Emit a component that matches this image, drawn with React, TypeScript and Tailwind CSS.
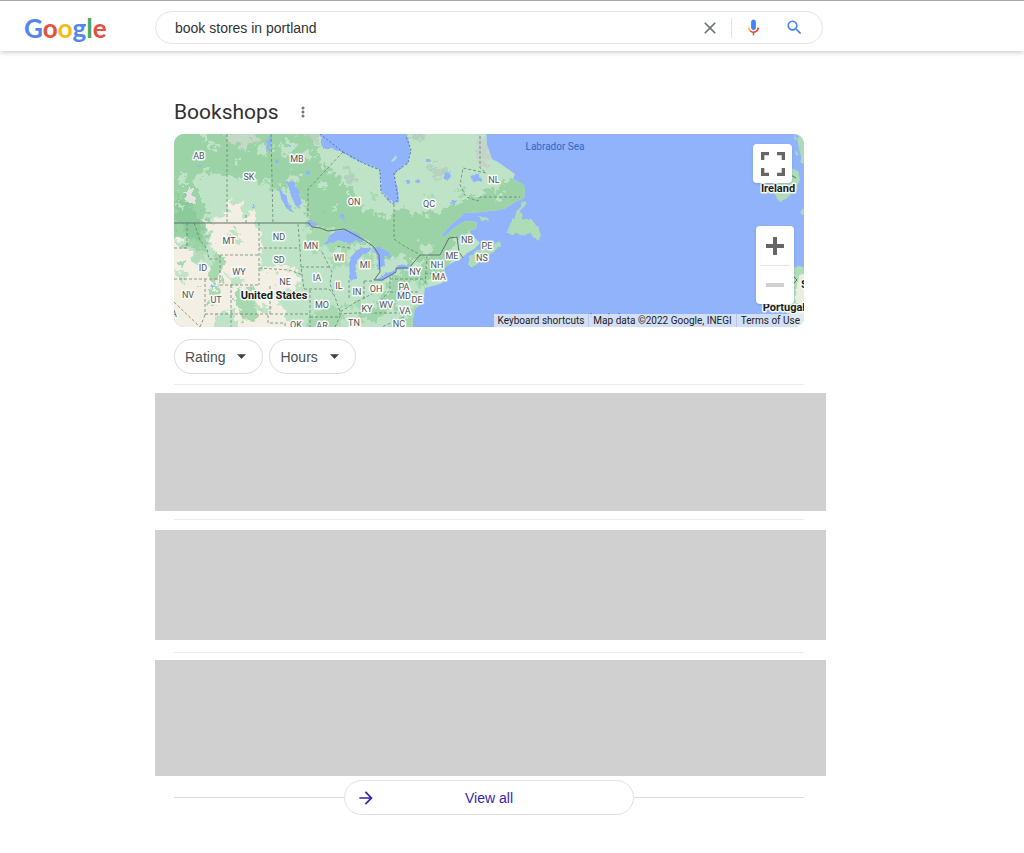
import { useState } from 'react';

const stateLabels: [string, number, number][] = [
  ['AB', 199, 156], ['SK', 249, 177], ['MB', 297, 159], ['ON', 354, 202], ['QC', 429, 204],
  ['NL', 494, 180], ['MT', 229, 241], ['ND', 279, 237], ['MN', 311, 246], ['SD', 279, 260],
  ['WI', 339, 258], ['MI', 365, 265], ['ID', 203, 268], ['WY', 239, 272], ['NE', 285, 282],
  ['IA', 317, 278], ['IL', 339, 286], ['IN', 357, 292], ['OH', 376, 289], ['NY', 415, 272],
  ['PA', 404, 287], ['NH', 437, 265], ['ME', 452, 256], ['NB', 467, 240], ['PE', 487, 246],
  ['NS', 482, 258], ['MA', 439, 277], ['MD', 404, 296], ['DE', 417, 300], ['NV', 188, 295],
  ['UT', 216, 300], ['WV', 386, 305], ['VA', 405, 311], ['MO', 322, 305], ['KY', 367, 309],
  ['TN', 354, 323], ['NC', 399, 324], ['OK', 296, 325], ['AR', 322, 326], ['A', 174, 314],
];

const countryLabels: [string, number, number][] = [
  ['United States', 274, 295],
  ['Ireland', 778, 188],
  ['Portugal', 784, 307],
  ['Spain', 815, 284],
];

function MapCanvas() {
  return (
    <svg
      viewBox="174 134 630 193"
      preserveAspectRatio="xMidYMid slice"
      className="block h-[193px] w-full bg-[#90b3fb]"
      aria-label="Map of bookshops"
    >
      <defs>
        <filter id="rough" x="-5%" y="-5%" width="110%" height="110%">
          <feTurbulence type="fractalNoise" baseFrequency="0.14" numOctaves="4" seed="4" />
          <feDisplacementMap in="SourceGraphic" scale="20" xChannelSelector="R" yChannelSelector="G" />
        </filter>
        <filter id="coast" x="-5%" y="-5%" width="110%" height="110%">
          <feTurbulence type="fractalNoise" baseFrequency="0.2" numOctaves="2" seed="9" />
          <feDisplacementMap in="SourceGraphic" scale="4" xChannelSelector="R" yChannelSelector="G" />
        </filter>
        <clipPath id="land">
          <path d="M160 120H485L487 145L492 159L498 162L505 167L515 174L513 179L524 185L525 192L524 198L515 202L506 208L499 210L482 212L465 213L452 224L441 236L445 236L455 227L465 221L477 222L476 229L469 231L472 235L480 243L474 249L467 253L462 258L452 263L445 267L444 274L447 280L440 284L425 288L424 295L420 305L415 309L413 319L412 340H160Z" />
        </clipPath>
      </defs>

      {/* Continent */}
      <g clipPath="url(#land)">
        <rect x="160" y="120" width="400" height="220" fill="#bfe3c7" />
        <g filter="url(#rough)">
          <path fill="#9bd3a6" d="M150 110H302L312 140L322 166L338 176L349 190L359 207L374 212L389 215L405 208L419 215L440 210L455 203L474 196L489 191L506 182L540 178V215L460 236L440 262L410 262L396 252L392 262L368 246L344 230L308 226L306 206L300 196L290 182L284 194L268 178L250 182L236 178L222 174L204 172L196 178L198 190L206 212L206 228L208 240L204 256L192 244L182 238L150 240Z" />
          <path fill="#8bca9a" d="M174 192L186 200L196 210L202 224L202 242L192 240L184 228L174 222Z" />
          <path fill="#a6d9b0" d="M308 226L340 232L362 240L352 252L334 250L324 246L312 254L306 238Z" />
          <path fill="#aadab3" d="M328 256L348 254L346 266L334 268Z M360 256L374 252L374 264L362 266Z" />
          <path fill="#9fd5aa" d="M392 276L404 272L424 264L438 256L458 250L448 268L430 282L420 286L412 278L404 290L394 306L382 316L366 324L360 318L376 304L384 292Z" />
          <path fill="#a6d9b0" d="M310 306L328 302L342 312L334 340H306Z" />
          <path fill="#a6d9b0" d="M400 318L416 304V340H392L386 326Z" />
          <path fill="#f4efe4" d="M150 238L176 240L188 248L194 262L206 268L216 262L210 236L206 222L226 220L252 222L260 232L262 250L260 270L292 268L302 276L298 288L276 290L280 306L290 320V340H150Z" />
          <path fill="#f4efe4" d="M212 220L226 214L229 200L240 203L243 214L254 217L252 226Z" />
          <path fill="#bfe3c7" d="M262 258H300L300 268L262 266Z" />
          <path fill="#b2dcb9" d="M192 250L206 252L204 262L196 262Z" />
          <path fill="#a8d8b0" d="M214 254L224 256L222 268L218 282L222 292L210 308L212 286L210 272Z" />
          <path fill="#a8d8b0" d="M236 288L252 290L258 304L256 318L242 322L236 306Z" />
          <path fill="#bfe3c7" d="M218 314L234 310L236 330H214Z" />
          <path fill="#bfe3c7" d="M256 304L272 306L270 312H256Z" />
          <path fill="#bfe3c7" d="M178 270L186 272L184 286L180 282Z" />
          <path fill="#bfe3c7" d="M226 232L240 234L244 242L234 242Z" />
          <path fill="#bfe3c7" d="M226 274L238 276L244 284L234 284Z" />
          <path fill="#bfe3c7" d="M286 296L316 296L316 318L288 314Z" />
          <path fill="#c4d8c8" d="M222 130L250 130L258 142L242 148L230 142Z" />
          <path fill="#b8d0be" d="M292 124H322L320 142L308 140Z" />
          <path fill="#b4cfbb" d="M408 130L424 132L422 142L412 140Z" />
          <path fill="#b6d1bd" d="M428 166L446 168L444 176L434 178Z" />
          <path fill="#c6d3cb" d="M476 130L486 138L492 160L486 166L476 160Z" />
          <path fill="#b4d1bb" d="M346 166L354 168L356 182L350 184Z" />
          <path fill="#e3e5e2" d="M180 190L192 192L196 204L186 202Z" />
        </g>
        <g filter="url(#rough)" fill="#bfe3c7">
          <circle cx="214" cy="146" r="4" />
          <circle cx="204" cy="136" r="3" />
          <circle cx="236" cy="162" r="3" />
          <circle cx="264" cy="150" r="6" />
          <circle cx="288" cy="150" r="8" />
          <circle cx="308" cy="156" r="5" />
          <circle cx="294" cy="178" r="5" />
          <circle cx="322" cy="184" r="4" />
          <circle cx="336" cy="206" r="3" />
          <circle cx="426" cy="250" r="7" />
          <circle cx="396" cy="258" r="5" />
          <circle cx="388" cy="318" r="3" />
          <circle cx="500" cy="198" r="4" />
          <circle cx="182" cy="180" r="4" />
          <circle cx="180" cy="206" r="3" />
        </g>
        <g filter="url(#rough)" fill="#a6d9b0">
          <circle cx="270" cy="186" r="4" />
          <circle cx="296" cy="206" r="3" />
          <circle cx="372" cy="194" r="3" />
          <circle cx="430" cy="196" r="3" />
          <circle cx="462" cy="190" r="4" />
          <circle cx="342" cy="308" r="4" />
          <circle cx="358" cy="304" r="3" />
          <circle cx="180" cy="264" r="3" />
          <circle cx="236" cy="228" r="2" />
          <circle cx="196" cy="288" r="2" />
        </g>
      </g>

      {/* Hudson Bay, St Lawrence and lakes */}
      <g fill="#90b3fb" filter="url(#coast)">
        <path d="M319 128H402L408 138L411 150L408 162L400 169L394 174L398 190L399 201L394 204L388 199L381 190L380 169L363 163L350 157L342 152L332 149L323 149Z" />
        <path d="M324 245L330 235L337 231L344 229L357 232L365 241L358 241L349 244L339 240L331 243Z" />
        <path d="M350 280L349 262L354 252L361 248L373 248L364 254L357 260L356 279Z" />
        <path d="M372 247L380 248L389 252L391 258L384 257L385 266L379 270L376 266L378 257Z" />
        <path d="M374 280L382 275L395 270L396 273L382 281Z" />
        <path d="M396 267L402 265L410 264L409 268L397 270Z" />
        <path d="M286 181L294 182L298 190L301 200L300 209L295 205L291 194Z" />
        <path d="M279 188L283 190L288 202L293 211L288 211L281 198Z" />
        <path d="M266 143L270 134L272 142L270 152L266 150Z" />
        <path d="M308 219L311 221L320 225L313 226L309 225Z" />
        <path d="M471 177L478 173L482 180L474 182Z" />
        <path d="M444 172L451 171L449 179L445 180Z" />
        <path d="M450 202L457 200L455 205Z" />
        <path d="M340 214L346 216L344 220L340 218Z" />
        <path d="M253 202L256 208L253 207Z" />
        <path d="M210 284L215 287L212 289Z" />
        <circle cx="308" cy="173" r="2" />
        <circle cx="290" cy="147" r="1" />
        <circle cx="408" cy="182" r="2" />
        <circle cx="417" cy="181" r="2" />
        <circle cx="428" cy="160" r="2" />
        <circle cx="324" cy="212" r="1" />
        <circle cx="200" cy="166" r="1" />
        <circle cx="277" cy="162" r="2" />
      </g>

      {/* Islands */}
      <g fill="#aedcb7" filter="url(#coast)">
        <path d="M524 201L517 212L510 225L506 234L515 234L525 235L530 233L534 238L539 241L541 232L535 224L530 219L522 219L521 211L527 203Z" />
        <path d="M468 266L470 256L478 250L490 248L494 243L500 240L501 246L494 252L483 258L475 266Z" />
        <path d="M478 216L484 216L490 221L482 221Z" />
        <path d="M480 245L492 246L490 249L482 248Z" />
        <path d="M776 200L774 190L780 180L778 170L790 167L798 171L800 180L795 191L788 197L782 201Z" />
        <path d="M797 140L802 134L812 134V166L802 163L800 152Z" />
        <path d="M794 135L797 138L795 142Z M795 148L798 153L796 155Z" />
        <path d="M801 213L806 204V216Z" />
        <path d="M788 268L812 266V340H786L790 320L782 304Z" />
      </g>
      <path d="M391 161L396 155L397 158L393 162Z" fill="#b5dccf" />
      <path d="M798 276L808 272V303H795Z M790 314L808 308V330H796Z" fill="#e9efe0" filter="url(#coast)" />
      <path d="M794 277l3 3l-3 3M789 174l7 4" fill="none" stroke="#5f7567" strokeWidth="1" />
      <path d="M591 313v5M609 313v4M619 313v3" stroke="#3f63b5" strokeWidth="1" />

      {/* State and province borders */}
      <g fill="none" stroke="#63806c" strokeWidth="1" strokeDasharray="3 2" opacity="0.75">
        <path d="M227 134V223M271 134L273 223M343 152L308 189V218M394 204V239L404 246L419 254" />
        <path d="M259 223V285M259 248H300M298 224L300 249L301 267L304 289M259 268L289 270L303 275M220 255H259M220 255V285H259" />
        <path d="M187 223V248H174M174 279H220M205 279V315M231 285V327M205 314H310M270 286V314M174 302L200 327M205 315L200 327" />
        <path d="M194 223L200 240L207 249L209 259H220M301 267H329M304 289H329L333 294M310 290V327M310 317H338M322 252L326 260L332 272L330 284L336 300L340 312L356 302L376 292" />
        <path d="M349 280V298M364 281V300M364 281H372M390 276V290L378 304M390 279H424M390 292H418M339 314L356 313H404M335 327L341 314M404 317L382 327" />
        <path d="M427 256L425 286M425 274L444 272M350 248L335 246M480 136V168L486 173L463 168L460 185L466 197L478 201L480 197L520 197" />
        <path d="M268 315V323H285V327M246 223V215" />
      </g>
      <path d="M320 134L343 152M343 152L363 163L380 170L381 192L392 204L398 200L394 173L408 163L411 150L406 136" fill="none" stroke="#5277ae" strokeWidth="1" strokeDasharray="2 2" />
      <path d="M174 223H309L312 227L320 228L328 231L344 229L364 240L374 247L379 255L380 272L374 280L382 280L396 272V268H409L420 255L440 255L449 238L457 237L459 252L463 258" fill="none" stroke="#5f7567" strokeWidth="1" />

      <g
        className="font-['Roboto',sans-serif] text-[9px]"
        textAnchor="middle"
        fill="#51565b"
        stroke="#f5faf6"
        strokeWidth="3"
        strokeLinejoin="round"
        paintOrder="stroke"
      >
        {stateLabels.map(([name, x, y]) => (
          <text key={name} x={x} y={y + 3}>{name}</text>
        ))}
      </g>
      <g
        className="font-['Roboto',sans-serif] text-[11px] font-bold"
        textAnchor="middle"
        fill="#1c1e20"
        stroke="#f5faf6"
        strokeWidth="3"
        strokeLinejoin="round"
        paintOrder="stroke"
      >
        {countryLabels.map(([name, x, y]) => (
          <text key={name} x={x} y={y + 4}>{name}</text>
        ))}
      </g>
      <text x="555" y="150" textAnchor="middle" fill="#3566c9" className="font-['Roboto',sans-serif] text-[10px]">
        Labrador Sea
      </text>
    </svg>
  );
}

function Header() {
  const [query, setQuery] = useState('book stores in portland');

  return (
    <header className="flex h-[51px] items-center border-t border-[#a9a9a9] bg-white pt-[3px] shadow-[0_1px_5px_rgba(32,33,36,0.28)]">
      <a
        href="#home"
        aria-label="Google home"
        className="w-[155px] shrink-0 pl-6 font-['Lato',sans-serif] text-[26px] font-bold leading-8"
      >
        <span className="text-[#5285f0]">G</span>
        <span className="text-[#e5503f]">o</span>
        <span className="text-[#f6bb17]">o</span>
        <span className="text-[#5285f0]">g</span>
        <span className="text-[#43ab57]">l</span>
        <span className="text-[#e5503f]">e</span>
      </a>
      <form
        role="search"
        onSubmit={(e) => e.preventDefault()}
        className="flex h-[33px] w-full max-w-[668px] items-center rounded-full border border-[#e3e5e8] pl-[19px] pr-3.5"
      >
        <input
          aria-label="Search"
          value={query}
          onChange={(e) => setQuery(e.target.value)}
          className="min-w-0 flex-1 bg-transparent text-sm text-[#333] outline-none"
        />
        <button type="button" aria-label="Clear" onClick={() => setQuery('')} className="p-1">
          <svg viewBox="0 0 24 24" className="h-5 w-5" fill="#70757a">
            <path d="M19 6.41L17.59 5 12 10.59 6.41 5 5 6.41 10.59 12 5 17.59 6.41 19 12 13.41 17.59 19 19 17.59 13.41 12z" />
          </svg>
        </button>
        <span className="ml-[7px] mr-2 h-5 w-px bg-[#dfe1e5]" />
        <button type="button" aria-label="Search by voice" className="p-1">
          <svg viewBox="0 0 24 24" className="h-[19px] w-[19px]">
            <path fill="#4285f4" d="M12 15c1.66 0 3-1.31 3-2.97V4.98C15 3.32 13.66 2 12 2S9 3.32 9 4.98v7.05C9 13.69 10.34 15 12 15z" />
            <path fill="#34a853" d="M11 18.08h2V22h-2z" />
            <path fill="#fbbc04" d="M7.05 16.87A6.9 6.9 0 0 1 5 12h2c0 1.45.56 2.42 1.47 3.38v.32l-1.15 1.18z" />
            <path fill="#ea4335" d="M12 16.93a4.97 4.97 0 0 1-3.54-1.55l-1.41 1.49A6.98 6.98 0 0 0 12 18.93c3.87 0 6.99-2.92 6.99-6.93h-1.99c0 2.92-2.24 4.93-5 4.93z" />
          </svg>
        </button>
        <button type="submit" aria-label="Search" className="ml-3.5 p-1">
          <svg viewBox="0 0 24 24" className="h-[19px] w-[19px]" fill="#4285f4">
            <path d="M15.5 14h-.79l-.28-.27A6.47 6.47 0 0 0 16 9.5 6.5 6.5 0 1 0 9.5 16c1.61 0 3.09-.59 4.23-1.57l.27.28v.79l5 4.99L20.49 19l-4.99-5zm-6 0C7.01 14 5 11.99 5 9.5S7.01 5 9.5 5 14 7.01 14 9.5 11.99 14 9.5 14z" />
          </svg>
        </button>
      </form>
    </header>
  );
}

function FilterChip({ label }: { label: string }) {
  return (
    <button
      type="button"
      className="flex h-[35px] items-center gap-3 rounded-full border border-[#dadce0] pl-2.5 pr-4 text-sm text-[#4d5156]"
    >
      {label}
      <svg viewBox="0 0 10 5" className="h-[5px] w-[9px]" fill="#3c4043">
        <path d="M0 0h10L5 5z" />
      </svg>
    </button>
  );
}

function MapPanel() {
  return (
    <section className="relative overflow-hidden rounded-[10px]">
      <MapCanvas />
      <button
        type="button"
        aria-label="Toggle fullscreen"
        className="absolute right-3 top-2.5 flex h-[39px] w-[39px] items-center justify-center rounded-sm bg-white shadow"
      >
        <svg viewBox="0 0 18 18" className="h-6 w-6" fill="#666">
          <path d="M0 0v6h2.5V2.5H6V0H0zm16 0h-4v2.5h3.500V6H18V0h-2zm-.5 15.500H12V18h6v-6h-2.500v3.500zM2.500 12H0v6h6v-2.500H2.500V12z" />
        </svg>
      </button>
      <div className="absolute right-2.5 top-[92px] flex w-[38px] flex-col items-center rounded-sm bg-white shadow">
        <button type="button" aria-label="Zoom in" className="flex h-[39px] w-full items-center justify-center">
          <svg viewBox="0 0 18 18" className="h-[18px] w-[18px]" fill="#666">
            <path d="M7 0h4v7h7v4h-7v7H7v-7H0V7h7z" />
          </svg>
        </button>
        <span className="h-px w-[29px] bg-[#e6e6e6]" />
        <button type="button" aria-label="Zoom out" className="flex h-[38px] w-full items-center justify-center">
          <svg viewBox="0 0 18 18" className="h-[18px] w-[18px]" fill="#d0d0d0">
            <path d="M0 7h18v4H0z" />
          </svg>
        </button>
      </div>
      <div className="absolute bottom-0 right-0 flex h-[13px] items-center bg-[#dfe6f5]/85 font-['Roboto',sans-serif] text-[10px] leading-[13px] text-[#222]">
        <button type="button" className="px-1">Keyboard shortcuts</button>
        <span className="border-l border-[#b8c8ec] px-1">Map data ©2022 Google, INEGI</span>
        <a href="#terms" className="border-l border-[#b8c8ec] px-1">Terms of Use</a>
      </div>
    </section>
  );
}

export default function App() {
  return (
    <div className="min-h-screen bg-white font-['Liberation_Sans',Arial,sans-serif]">
      <Header />
      <main className="ml-[155px] mt-[47px] max-w-[671px]">
        <div className="ml-[19px] mr-[22px]">
          <div className="flex h-9 items-center gap-[18px] pb-2">
            <h1 className="font-['Roboto',sans-serif] text-[21px] leading-7 text-[#303134]">Bookshops</h1>
            <button type="button" aria-label="More options" className="px-1">
              <svg viewBox="0 0 4 12" className="h-3 w-1" fill="#70757a">
                <circle cx="2" cy="2" r="1.5" />
                <circle cx="2" cy="6" r="1.5" />
                <circle cx="2" cy="10" r="1.5" />
              </svg>
            </button>
          </div>
          <MapPanel />
          <div className="flex gap-1.5 border-b border-[#ebebeb] pb-2.5 pt-3">
            <FilterChip label="Rating" />
            <FilterChip label="Hours" />
          </div>
        </div>

        {/* Result placeholders */}
        <div className="mt-2 h-[118px] bg-[#d0d0d0]" />
        <hr className="ml-[19px] mr-[22px] mt-2 border-[#ebebeb]" />
        <div className="mt-2.5 h-[110px] bg-[#d0d0d0]" />
        <hr className="ml-[19px] mr-[22px] mt-3 border-[#ebebeb]" />
        <div className="mt-[7px] h-[116px] bg-[#d0d0d0]" />

        <div className="ml-[19px] mr-[22px] mt-1 flex items-center">
          <span className="h-px flex-1 bg-[#dadce0]" />
          <a
            href="#all"
            className="flex h-[35px] w-[290px] items-center rounded-full border border-[#e0e2e5] px-[11px] text-sm text-[#3a1fb0]"
          >
            <svg viewBox="0 0 24 24" className="h-5 w-5" fill="#3a1fb0">
              <path d="M12 4l-1.41 1.41L16.17 11H4v2h12.17l-5.58 5.59L12 20l8-8z" />
            </svg>
            <span className="flex-1 pr-5 text-center">View all</span>
          </a>
          <span className="h-px flex-1 bg-[#dadce0]" />
        </div>
      </main>
    </div>
  );
}
